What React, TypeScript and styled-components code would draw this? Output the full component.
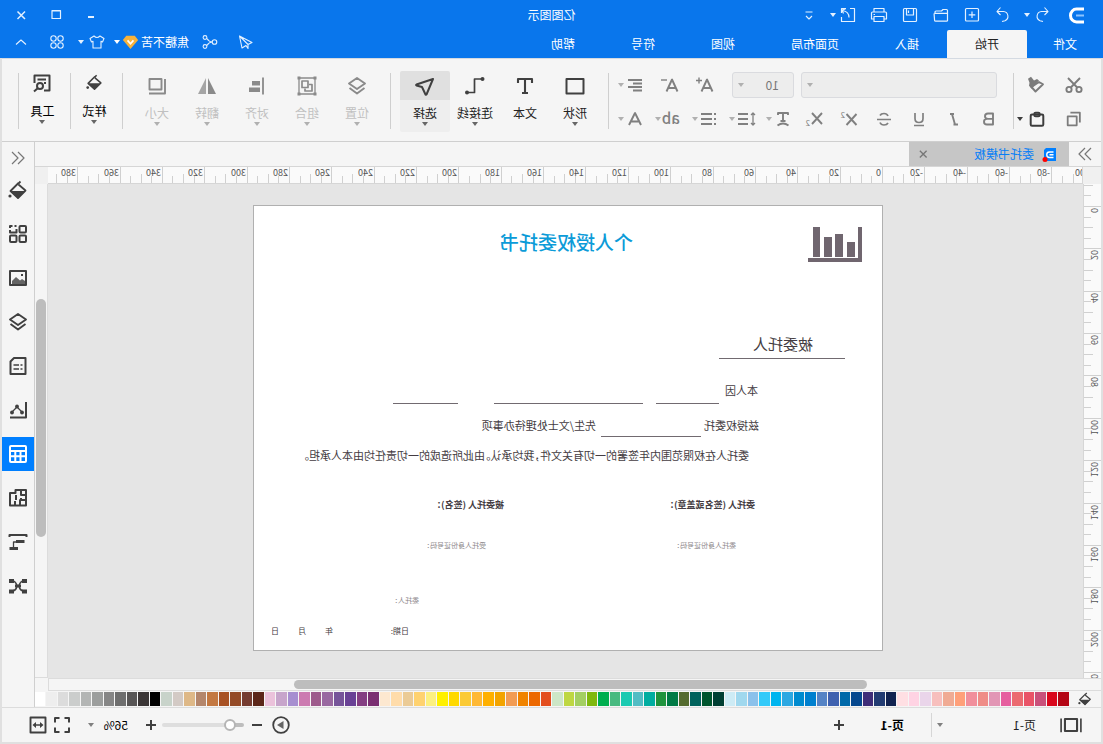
import React, { useLayoutEffect, useRef, useState } from 'react';
import styled, { createGlobalStyle } from 'styled-components';

const GlobalStyle = createGlobalStyle`
  * { box-sizing: border-box; }
  body { margin: 0; background: #e0e0e0; }
  body, button, select, input { font-family: "Noto Sans CJK SC", "Noto Sans", sans-serif; font-size: 12px; line-height: 16px; }
  button { border: 0; padding: 0; margin: 0; background: none; color: inherit; cursor: pointer; }
  svg { display: block; flex: none; }
`;

/* The whole window is shown as a mirror image. */
const Window = styled.div`
  display: flex; flex-direction: column; min-height: 100vh;
  transform: scaleX(-1); overflow: hidden; color: #222;
`;

/* ---------- icons ---------- */
type IconProps = { name: string; size?: number };
const S = ({ children, w = 1.6 }: { children: React.ReactNode; w?: number }) => (
  <g fill="none" stroke="currentColor" strokeWidth={w} strokeLinejoin="round">{children}</g>
);
const F = ({ d }: { d: string }) => <path d={d} fill="currentColor" />;

const icons: Record<string, React.ReactNode> = {
  undo: <S w={1.1}><path d="M7.500 2.500 4 6.500 7.500 10M4 6.500H10.500a4.800 4.800 0 0 1 1.500 9.200L9 16.500" /></S>,
  redo: <S w={1.1}><path d="M12.500 2.500 16 6.500 12.500 10M16 6.500H9.500a4.800 4.800 0 0 0 -1.500 9.200L11 16.500" /></S>,
  newDoc: <S w={1.2}><rect x="3.500" y="3.500" width="13" height="12.500" rx="1" /><path d="M10 6.500v6.500M6.700 9.800h6.600" /></S>,
  open: <S w={1.2}><path d="M3.500 16V5.500q0-1 1-1H8L9.500 6h5.500q1 0 1 1V8.500M3.500 9q0-.7 1-.7H16q1 0 .9 1L16.400 15.500q-.1 .7-1 .7H4.500q-1 0-1-1Z" /></S>,
  save: <S w={1.2}><path d="M3.500 4.500q0-1 1-1H15.500q1 0 1 1V15.500q0 1-1 1H4.500q-1 0-1-1ZM6.500 3.500V10H13.500V3.500M11.500 5.500V8" /></S>,
  print: <S w={1.2}><path d="M5 7V3.500H15V7M5 14H2.500V8q0-1 1-1h13q1 0 1 1v6H15M5 11.500H15V16.500H5ZM14 9.500h1.500" /></S>,
  export: <S w={1.2}><path d="M8 3.500H3.500V16.500H16.500V12M12 3.500h4.500V8M9 12.500q0-6 6.500-7M12.500 4l3.500 1-1.500 3.500" /></S>,
  customize: <S w={1.1}><path d="M6.500 7h7M7 11l3 3 3-3" /></S>,
  min: <S w={2}><path d="M7 12h6" /></S>,
  max: <S w={1.2}><path d="M5.500 5.500h8.500v8H5.500ZM5.500 6h8.500" /></S>,
  close: <S w={1.5}><path d="M6 6.500l7.500 7.500M13.500 6.500L6 14" /></S>,
  send: <S w={1.1}><path d="M16.500 4 4 10.500l4 2V16.500L10 13.500l4 2.500ZM16.500 4 8 12.500" /></S>,
  share: <S w={1.1}><circle cx="5.500" cy="10" r="2.300" /><circle cx="15" cy="5.500" r="1.900" /><circle cx="15" cy="14.500" r="1.900" /><path d="M7.800 10q3 0 5.300-3.500M7.800 10q3 0 5.300 3.500" /></S>,
  vip: <><path d="M5 2h10l4 5-9 10.500L1 7Z" fill="#f7b23b" /><path d="M6.500 7.500 10 11.500l3.500-4" fill="none" stroke="#fff" strokeWidth="2" /></>,
  shirt: <S w={1.1}><path d="M7 4 3 6.500 4.500 10 6 9.300V16h8V9.300l1.500.7L17 6.500 13 4q-3 3-6 0Z" /></S>,
  clover: <S w={1.1}><circle cx="6.500" cy="6.500" r="2.700" /><circle cx="13.500" cy="6.500" r="2.700" /><circle cx="6.500" cy="13.500" r="2.700" /><circle cx="13.500" cy="13.500" r="2.700" /></S>,
  up: <S w={1.1}><path d="M5 12.500 10 8l5 4.500" /></S>,
  cut: <S w={1.9}><circle cx="5" cy="14.500" r="2.600" /><circle cx="15" cy="14.500" r="2.600" /><path d="M4 3 13.200 12.500M16 3 6.800 12.500" /></S>,
  copy: <S w={2}><path d="M7 7h10v10H7ZM3.500 14v-11H14" /></S>,
  painter: <><S w={1.9}><path d="M7 7 3 9.300 10.500 16.500 14.500 12Z" /></S><F d="M7 5.500 9 4l3 1.500L15 1.800l3 2-1.500 4 .5 3-2.500 3Z" /></>,
  paste: <S w={2.2}><rect x="3" y="5" width="14" height="12.500" rx="1.500" /><rect x="7" y="3" width="6" height="4" rx="1.500" /></S>,
  bold: <S w={1.9}><path d="M6 4.500h5q3 0 3 2.700t-3 2.700H6ZM6 9.900h6q3 0 3 2.800t-3 2.800H6Z" /></S>,
  italic: <S w={1.9}><path d="M10 5h4M12 5 9 15.500M6 15.500h4.500" /></S>,
  underline: <S w={1.7}><path d="M6 4v5.500q0 4 4 4t4-4V4M5 16.500h10" /></S>,
  strike: <S w={1.7}><path d="M14 6.500q-1-2-4-2t-4 2.500M3 10.500h14M14 13.500q-1 2.500-4 2.500t-4-2" /></S>,
  sup: <><S w={1.9}><path d="M2.500 5l10 11M12.500 5l-10 11" /></S><text x="14" y="9" fontSize="8" fill="currentColor">2</text></>,
  sub: <><S w={1.9}><path d="M2 4l10 11M12 4l-10 11" /></S><text x="14" y="17" fontSize="8" fill="currentColor">2</text></>,
  textFx: <S w={1.9}><path d="M5 6V4H15V6M10 4V12M7.500 12h5M4.500 16.500q5.500-4 11 0" /></S>,
  lineGap: <S w={1.9}><path d="M8 5h10M8 10h10M8 15h10" /><path strokeWidth="1.300" d="M3 4v12M1 6l2-2 2 2M1 14l2 2 2-2" /></S>,
  list: <S w={1.9}><path d="M7 5h11M7 10h11M7 15h11M3 5h2M3 10h2M3 15h2" /></S>,
  ab: <text x="2" y="15" fontSize="15" fontWeight="500" fill="currentColor">ab</text>,
  fontA: <S w={1.9}><path d="M4 16 10 4l6 12M6.500 12.500h7" /></S>,
  bigger: <S w={1.9}><path d="M2.500 16.500 8 4.500l5.500 12M4.500 13h7" /><path d="M13 5.500h6M16 2.500v6" strokeWidth="1.400" /></S>,
  smaller: <S w={1.9}><path d="M2.500 16.500 8 4.500l5.500 12M4.500 13h7" /><path d="M13 5h6" strokeWidth="1.400" /></S>,
  align: <S w={1.8}><path d="M3 5h14M3 8.500h9M3 12h14M3 15.500h9" /></S>,
  rect: <S w={2}><path d="M1.500 3h17v14.500h-17Z" /></S>,
  text: <S w={2.1}><path d="M3 7V3h14v4M10 3v14M7 17h6" /></S>,
  connector: <><S w={1.7}><path d="M4 3H10.500V16.500H17" /></S><circle cx="2.500" cy="16.500" r="0" /><circle cx="2.500" cy="3" r="2" fill="currentColor" /><circle cx="18" cy="16.500" r="2" fill="currentColor" /></>,
  select: <S w={2}><path d="M2 3 18.500 8.500q.8.500 0 1L13 11 9.500 18.500q-.6.600-1 0Z" /></S>,
  layers: <S w={1.9}><path d="M10 2 18 7.500 10 13 2 7.500ZM2.500 12 10 17.500 17.500 12" /></S>,
  group: <><S w={1.3}><path d="M2 2h16v16H2Z" /><path d="M8 8.500H5V15h7v-2.500" strokeWidth="1.700" /><rect x="9" y="5" width="6" height="6.500" strokeWidth="1.700" /></S><F d="M.5.500h3v3h-3ZM16.500.500h3v3h-3ZM.5 16.500h3v3h-3ZM16.500 16.500h3v3h-3Z" /></>,
  alignObj: <><S w={1.8}><path d="M4 1.500v17" /></S><F d="M7 5h8v4.500H7ZM7 11.500h11V16H7Z" /></>,
  flip: <><F d="M9 2v16H1Z" /><path d="M11 2v16h8Z" fill="currentColor" opacity=".75" /></>,
  sizeObj: <S w={1.9}><path d="M5.500 3h12v10.500h-12ZM2 3v14.500h16" /></S>,
  tools: <S w={2}><path d="M8 17.500H2.500V2.500H17.500V10M6 6.500h8.500M6 10h2" /><circle cx="12" cy="13" r="3" /><path d="M14 15l4 3.500" /></S>,
  bucket: <><S w={1.8}><path d="M9.500 3 17.500 11 10 18 2.500 10.500 9.500 4.500M7.500 1.500 10 4" /></S><F d="M3 11 H17.500 L10 18.500Z" /><circle cx="18" cy="16" r="1.600" fill="currentColor" /></>,
  tiles: <S w={2}><rect x="2" y="2" width="6.500" height="6.500" rx="1" /><path d="M11.500 5V8.500H18V6M11.500 2h2M15.500 2H18V4" /><rect x="2" y="11.500" width="6.500" height="6.500" rx="1" /><rect x="11.500" y="11.500" width="6.500" height="6.500" rx="1" /></S>,
  image: <><S w={2}><path d="M2 3h16v14H2Z" /></S><path d="M3 16v-3l3-2 2 1.500 4-3.500 4 4v3Z" fill="currentColor" opacity=".8" /><F d="M5 6h2v2H5Z" /></>,
  page: <S w={2}><path d="M2.500 2H14l3.500 3.500V18h-15Z" /><path d="M5.500 9h2M5.500 13h2M9 9h5.500M9 13h5.500" strokeWidth="1.700" /></S>,
  chart: <><S w={2}><path d="M2 2v15.500h16" /><path d="M6 12l5-5 5 5" strokeWidth="1.300" /></S><circle cx="6" cy="12.500" r="1.900" fill="currentColor" /><circle cx="11" cy="6.500" r="1.900" fill="currentColor" /><circle cx="16" cy="12.500" r="1.900" fill="currentColor" /></>,
  table: <S w={2}><rect x="2" y="2" width="16" height="16" rx="1" /><path d="M2 7h16M2 12.300h16M7.500 7v11M12.700 7v11" /></S>,
  plan: <S w={2}><path d="M2 2h10.500v3H18v12.500H2ZM7 2v5H2M7 10v3M2 12h6v5M12 7v5M13 17v-4" /></S>,
  gantt: <><S w={2}><path d="M1.500 5V3h17v2" /><path d="M9 10h5.500v5" strokeWidth="1.300" /></S><F d="M3.500 8h8.500v3H3.500ZM10 15h8.500v3H10Z" /></>,
  mindmap: <><S w={1.5}><path d="M4 5q4 0 5 5q-1 5-5 5M16 5q-4 0-5 5q1 5 5 5" /></S><F d="M1 3h5v4H1ZM14 3h5v4h-5ZM1 13.500h5v4H1ZM14 13.500h5v4h-5ZM7 8.500h6v3H7Z" /></>,
  right: <S w={1.2}><path d="M4 4l6 6-6 6M10 4l6 6-6 6" /></S>,
  left: <S w={1.2}><path d="M16 4l-6 6 6 6M10 4l-6 6 6 6" /></S>,
  plus: <S w={2}><path d="M10 5v10M5 10h10" /></S>,
  minus: <S w={2}><path d="M5 10h10" /></S>,
  play: <><S w={1.8}><circle cx="10" cy="10" r="7.800" /></S><path d="M7.500 6l6.500 4-6.500 4Z" fill="currentColor" opacity=".8" /></>,
  fit: <S w={2}><path d="M3 7.500V3h4.500M12.500 3H17v4.500M17 12.500V17h-4.500M7.500 17H3v-4.500" /></S>,
  fitWidth: <><S w={1.9}><path d="M2.500 2.500h15v15h-15Z" /><path d="M6 10h8" strokeWidth="1.500" /></S><F d="M4.500 10 8 7v6ZM15.500 10 12 7v6Z" /></>,
  pages: <S w={1.9}><path d="M4.500 4.500h11v11H4.500Z" /><path d="M1 4v12.500M19 4v12.500" strokeWidth="1.500" /></S>,
};

const IconSvg = styled.svg`overflow: visible;`;
const Icon = ({ name, size = 20 }: IconProps) => (
  <IconSvg width={size} height={size} viewBox="0 0 20 20" aria-hidden="true">{icons[name]}</IconSvg>
);
const CaretSvg = styled.svg`color: var(--caret, currentColor);`;
const Caret = () => (
  <CaretSvg width="6" height="4" viewBox="0 0 6 4" aria-hidden="true"><path d="M0 0h6L3 4Z" fill="currentColor" /></CaretSvg>
);

/* ---------- title bar ---------- */
const Header = styled.header`background: #0976ec; color: #e4f1ff; height: 58px;`;
const TitleRow = styled.div`display: grid; grid-template-columns: 1fr auto 1fr; align-items: center; height: 30px;`;
const QuickBar = styled.div`display: flex; align-items: center; gap: 11px; padding-left: 19px;`;
const Logo = styled.svg`margin-right: 6px;`;
const WithCaret = styled.button<{ $gap?: number }>`display: flex; align-items: center; gap: ${p => p.$gap ?? 2}px;`;
const PlainButton = styled.button<{ $w?: number }>`
  display: flex; align-items: center; justify-content: center; width: ${p => p.$w ?? 20}px;
`;
const AppTitle = styled.h1`margin: 0; font-size: 12px; font-weight: 400; line-height: 16px; color: #fff;`;
const WindowControls = styled.div`display: flex; justify-content: flex-end; gap: 15px; padding-right: 11px;`;
const TabRow = styled.div`display: flex; justify-content: space-between; height: 28px;`;
const Tabs = styled.nav`display: flex;`;
const Tab = styled.button<{ $active?: boolean; $wide?: number }>`
  padding: 0 ${p => p.$wide ?? 28}px; height: 28px; border-radius: 2px 2px 0 0;
  color: ${p => (p.$active ? '#222' : '#fff')}; background: ${p => (p.$active ? '#f5f5f5' : 'none')};
`;
const UserBar = styled.div`display: flex; align-items: center; height: 24px; padding-right: 11px; gap: 16px;`;
const Account = styled.div`display: flex; align-items: center; gap: 7px; margin: 0 -5px;`;
const UserName = styled.button`display: flex; align-items: center; gap: 2px; color: #fff;`;

/* ---------- ribbon ---------- */
const Frame = styled.div`
  flex: 1; display: flex; flex-direction: column; background: #f5f5f5;
  border: solid #e0e0e0; border-width: 0 2px 2px;
`;
const Ribbon = styled.div`
  display: flex; height: 84px; padding-top: 9px; border-top: 1px solid #d4dae2; border-bottom: 1px solid #cfcfcf;
`;
const Divider = styled.i`width: 1px; height: 56px; margin-top: 5px; background: #cfcfcf; flex: none;`;
const Clipboard = styled.div`
  display: grid; grid-template: 34px 34px / 42px 39px; align-items: center; padding-left: 6px; color: #7c7c7c;
`;
const ClipCell = styled.button<{ $dark?: boolean; $start?: boolean }>`
  display: flex; align-items: center; gap: 5px; justify-content: ${p => (p.$start ? 'flex-start' : 'center')};
  padding-left: ${p => (p.$start ? 7 : 0)}px; color: ${p => (p.$dark ? '#3c3c3c' : 'inherit')};
`;
const FontGroup = styled.div`width: 404px; padding-left: 16px; color: #808080; --caret: #b0b0b0;`;
const FontRow = styled.div`display: flex; align-items: center; height: 34px;`;
const Field = styled.label<{ $w: number }>`
  display: grid; grid-template: 26px / 1fr 17px; align-items: center; width: ${p => p.$w}px; margin-right: 7px; color: #a0a0a0;
`;
const Select = styled.select`
  grid-area: 1 / 1 / 2 / 3; appearance: none; height: 26px; width: 100%; padding: 0 14px; margin: 0;
  border: 1px solid #dadbdf; border-radius: 3px; background: #ededed; color: #777;
`;
const FieldCaret = styled.span`grid-area: 1 / 2; padding-left: 5px; pointer-events: none;`;
const Spread = styled.div<{ $gap: number; $left?: number }>`
  display: flex; align-items: center; gap: ${p => p.$gap}px; margin-left: ${p => p.$left ?? 0}px;
`;
const ToolGroup = styled.div`display: flex; padding: 3px 9px 0 8px;`;
const Tool = styled.button<{ $active?: boolean; $dim?: boolean }>`
  display: flex; flex-direction: column; align-items: center; width: 50px; height: 61px; border-radius: 2px;
  color: ${p => (p.$dim ? '#c0c0c0' : '#222')};
  background: ${p => (p.$active ? 'linear-gradient(#e0e0e0 29px, #eeeeee 29px)' : 'none')};
  > span { height: 18px; line-height: 18px; margin-top: 4px; }
`;
const ToolIcon = styled.i<{ $dim?: boolean }>`
  display: flex; align-items: center; height: 29px; color: ${p => (p.$dim ? '#8a8a8a' : '#404040')};
`;
const ToolCaret = styled.i<{ $dim?: boolean }>`color: ${p => (p.$dim ? '#b0b0b0' : '#666')};`;
const NarrowTool = styled(Tool)`width: 51px; padding-left: 4px; color: #000; > span { margin-top: 6px; }`;
const NarrowIcon = styled(ToolIcon)`height: 27px; margin-top: 1px;`;

/* ---------- workspace ---------- */
const Body = styled.div`flex: 1; display: flex;`;
const Main = styled.main`flex: 1; min-width: 0; display: flex; flex-direction: column;`;
const DocTabs = styled.div`display: flex; height: 25px; border-bottom: 1px solid #d6d6d6; color: #777;`;
const DocTab = styled.div`
  display: flex; align-items: center; width: 160px; margin-left: 6px; padding: 0 4px 0 12px; background: #c6c6c6;
  > a { flex: 1; margin-left: 8px; color: #077ef6; text-decoration: none; }
`;
const Expand = styled.button`display: flex; align-items: center; width: 26px; justify-content: flex-end;`;
const Workspace = styled.div`flex: 1; display: grid; grid-template: 17px 1fr / 18px 1fr 13px; min-height: 0;`;
const Corner = styled.div`background: #f0f0f0;`;
const RulerSvg = styled.svg`display: block; width: 100%; height: 100%; background: #fafafa;`;
const HRuler = styled.div`border-bottom: 1px solid #d6d6d6; border-left: 1px solid #d6d6d6; overflow: hidden; min-width: 0;`;
const VRuler = styled.div`border-right: 1px solid #d6d6d6; overflow: hidden; contain: size;`;
const Canvas = styled.div`background: #e5e5e5; overflow: hidden; padding: 21px 0 27px 200px;`;
const VScroll = styled.div`
  display: grid; grid-template-rows: 115fr 239fr 140fr; border: solid #dcdcdc; border-width: 0 0 1px 1px; padding: 0 1px;
`;
const HScroll = styled.div`
  display: grid; grid-template-columns: 234fr 574fr 245fr; height: 13px; margin-right: 13px; padding: 1px 0;
  border: solid #dcdcdc; border-width: 1px 1px 1px 0;
`;
const VThumb = styled.i`grid-row: 2; border-radius: 5px; background: #bdbdbd;`;
const HThumb = styled.i`grid-column: 2; border-radius: 5px; background: #bdbdbd;`;

/* ---------- document page ---------- */
const Sheet = styled.article`position: relative; width: 630px; height: 446px; background: #fff; border: 1px solid #b0b0b0;`;
/* Shapes sit freely on the drawing sheet. */
const Shape = styled.p<{ $x: number; $y: number; $size?: number; $weight?: number; $color?: string }>`
  position: absolute; margin: 0; left: ${p => p.$x}px; top: ${p => p.$y - 10}px; line-height: 20px; white-space: nowrap;
  font-size: ${p => p.$size ?? 11}px; font-weight: ${p => p.$weight ?? 400}; color: ${p => p.$color ?? '#443c42'};
`;
/* Body sentence set with half-width punctuation. */
const Sentence = styled(Shape)`font-feature-settings: "halt";`;
const Rule = styled.i<{ $x: number; $y: number; $w: number }>`
  position: absolute; left: ${p => p.$x}px; top: ${p => p.$y}px; width: ${p => p.$w}px; height: 1px; background: #716a70;
`;
const Chart = styled.svg`position: absolute; left: 20px; top: 21px;`;

/* ---------- side panel, palette, status bar ---------- */
const Side = styled.aside`
  width: 33px; border-left: 1px solid #cfcfcf; display: flex; flex-direction: column; gap: 10px; color: #404040;
`;
const SideToggle = styled.button`display: flex; align-items: center; justify-content: center; height: 31px; margin-bottom: -10px; color: #777;`;
const SideButton = styled.button<{ $active?: boolean }>`
  display: flex; align-items: center; justify-content: center; height: 34px;
  color: ${p => (p.$active ? '#fff' : '#404040')}; background: ${p => (p.$active ? '#007fff' : 'none')};
`;
const Palette = styled.div`display: flex; align-items: center; height: 16px; color: #404040; padding-left: 9px;`;
const Swatches = styled.div`flex: 1; display: flex; gap: 1px; margin-left: 9px; height: 14px;`;
const Swatch = styled.button<{ $c: string }>`flex: 1; background: ${p => p.$c};`;
const Status = styled.footer`
  display: flex; align-items: center; height: 35px; border-top: 1px solid #dcdcdc; color: #404040; padding: 0 26px 0 19px;
  --caret: #808080;
`;
const PageSelect = styled.button`display: flex; align-items: center; justify-content: space-between; width: 99px; margin-left: 24px; color: #222;`;
const StatusDivider = styled.i`width: 1px; height: 24px; margin: 0 27px 0 5px; background: #d6d6d6;`;
const PageTab = styled.button`font-weight: 700; color: #000; margin-right: 31px;`;
const Spacer = styled.i`flex: 1;`;
const Zoom = styled.input`
  appearance: none; width: 82px; height: 12px; margin: 0 1px 0 3px; background: none;
  &::-webkit-slider-runnable-track { height: 4px; border-radius: 2px; background: linear-gradient(90deg, #bdbdbd 12px, #dedede 12px); }
  &::-webkit-slider-thumb { appearance: none; width: 12px; height: 12px; margin-top: -4px; border-radius: 6px; border: 2px solid #b5b5b5; background: #fff; }
`;
const ZoomValue = styled.button`display: flex; align-items: center; justify-content: space-between; width: 40px; margin: 0 16px 0 13px; color: #000;`;
const FitGroup = styled.div`display: flex; gap: 4px;`;

/* Ruler marks every 5 units; 20 units take STEP pixels. */
const STEP = 42.36;
const ticks = (origin: number, length: number) => {
  const from = Math.ceil((-origin - 24) / (STEP / 4));
  const to = Math.floor((length - origin) / (STEP / 4));
  return Array.from({ length: Math.max(0, to - from + 1) }, (_, i) => {
    const k = i + from;
    return { k, pos: (k * STEP) / 4, len: k % 4 === 0 ? 18 : k % 2 === 0 ? 9 : 7 };
  });
};

const useBox = () => {
  const ref = useRef<HTMLDivElement>(null);
  const [box, setBox] = useState({ w: 0, h: 0 });
  useLayoutEffect(() => {
    const el = ref.current!;
    const read = () => setBox({ w: el.clientWidth, h: el.clientHeight });
    read();
    const observer = new ResizeObserver(read);
    observer.observe(el);
    return () => observer.disconnect();
  }, []);
  return { ref, box };
};

const HorizontalRuler = () => {
  const { ref, box } = useBox();
  return (
    <HRuler ref={ref}>
      <RulerSvg>
        {ticks(199, box.w).map(t => (
          <g key={t.k}>
            <rect x={Math.round(199 + t.pos)} y={16 - t.len} width="1" height={t.len} fill="#d0d0d0" />
            {t.k % 4 === 0 && <text x={Math.round(201 + t.pos)} y="9" fontSize="9" fill="#555">{t.k * 5}</text>}
          </g>
        ))}
      </RulerSvg>
    </HRuler>
  );
};
const VerticalRuler = () => {
  const { ref, box } = useBox();
  return (
    <VRuler ref={ref}>
      <RulerSvg>
        {ticks(22, box.h).filter(t => t.k > -4).map(t => (
          <g key={t.k}>
            <rect x={17 - t.len} y={Math.round(22 + t.pos)} width={t.len} height="1" fill="#d0d0d0" />
            {t.k % 4 === 0 && (
              <text transform={`translate(10 ${Math.round(24 + t.pos)}) rotate(-90)`} textAnchor="end" fontSize="9" fill="#555">{t.k * 5}</text>
            )}
          </g>
        ))}
      </RulerSvg>
    </VRuler>
  );
};

const palette = (
  'b40615 d9071c c9507a e95367 eb6a70 e65f9f e296b5 ef8c87 f18f9c ffa07a f0ab94 f7bfbd ead5ea ffd3e3 ffdfe3 11224f 223b72 3f2d78 06488e 0069a9 3f61af 5583c5 0080cf 008bcf 2da8e2 00b5ef 33caf9 8bc1eb a0d8ee cdebf5 ' +
  '003f33 00552e 00625c 556b2f 007a45 1f933d 00ada0 52bdc4 1bcab1 48ba80 00ae4f 7fb80e a3cf62 bed742 cde6c7 e34e1f ec6800 f08300 f29c54 f3a400 ffb000 ffb935 fbca35 ffd900 fff000 fcf07f ffd26f ebcb96 ffdcaa fde8d0 ' +
  '7a2f72 843e82 694195 765499 9968a0 9e5b8c cc7bb1 a78fd0 c7a5cb ebc2db 5c2619 753b30 944b27 a85224 c37841 b4866b deb887 d3cac5 c8d3ca 000000 3b3636 575555 6e6e6e 868686 9c9e9d b3b5b4 cbcdcc dcdcdc eeeeee ffffff'
).split(' ');

const drawTools = [
  { icon: 'rect', label: '形状', caret: true },
  { icon: 'text', label: '文本', caret: false },
  { icon: 'connector', label: '连接线', caret: true },
  { icon: 'select', label: '选择', caret: true, active: true },
];
const arrangeTools = [
  { icon: 'layers', label: '位置' },
  { icon: 'group', label: '组合' },
  { icon: 'alignObj', label: '对齐' },
  { icon: 'flip', label: '翻转' },
  { icon: 'sizeObj', label: '大小' },
];
const sideTools = ['bucket', 'tiles', 'image', 'layers', 'page', 'chart', 'table', 'plan', 'gantt', 'mindmap'];

export default function App() {
  return (
    <>
      <GlobalStyle />
      <Window>
        <Header>
          <TitleRow>
            <QuickBar>
              <Logo width="15" height="17" viewBox="0 0 15 17">
                <path d="M0 2H7.500a6 6.500 0 0 1 0 13H0" fill="none" stroke="#fff" strokeWidth="3" />
                <path d="M0 8.500h8" stroke="#8cc3ff" strokeWidth="2" />
              </Logo>
              <WithCaret aria-label="undo"><Icon name="undo" /><Caret /></WithCaret>
              {['redo', 'newDoc', 'open', 'save', 'print'].map(n => (
                <PlainButton key={n} aria-label={n}><Icon name={n} /></PlainButton>
              ))}
              <WithCaret aria-label="export"><Icon name="export" /><Caret /></WithCaret>
              <PlainButton aria-label="customize"><Icon name="customize" /></PlainButton>
            </QuickBar>
            <AppTitle>亿图图示</AppTitle>
            <WindowControls>
              {['min', 'max', 'close'].map(n => (
                <PlainButton key={n} aria-label={n}><Icon name={n} /></PlainButton>
              ))}
            </WindowControls>
          </TitleRow>
          <TabRow>
            <Tabs>
              <Tab $wide={26}>文件</Tab>
              <Tab $active>开始</Tab>
              {['插入', '页面布局', '视图', '符号', '帮助'].map(t => <Tab key={t}>{t}</Tab>)}
            </Tabs>
            <UserBar>
              <PlainButton aria-label="send"><Icon name="send" /></PlainButton>
              <PlainButton aria-label="share"><Icon name="share" /></PlainButton>
              <Account>
                <UserName>焦糖不苦<Icon name="vip" size={17} /><Caret /></UserName>
                <WithCaret aria-label="theme" $gap={3}><Icon name="shirt" /><Caret /></WithCaret>
              </Account>
              <PlainButton aria-label="apps"><Icon name="clover" /></PlainButton>
              <PlainButton aria-label="collapse"><Icon name="up" /></PlainButton>
            </UserBar>
          </TabRow>
        </Header>

        <Frame>
          <Ribbon>
            <Clipboard>
              <ClipCell aria-label="cut"><Icon name="cut" /></ClipCell>
              <ClipCell aria-label="format painter" $start><Icon name="painter" /></ClipCell>
              <ClipCell aria-label="copy"><Icon name="copy" size={18} /></ClipCell>
              <ClipCell aria-label="paste" $dark $start><Icon name="paste" size={18} /><Caret /></ClipCell>
            </Clipboard>
            <Divider />
            <FontGroup>
              <FontRow>
                <Field $w={196}>
                  <Select aria-label="font"><option></option></Select>
                  <FieldCaret><Caret /></FieldCaret>
                </Field>
                <Field $w={62}>
                  <Select aria-label="font size"><option>10</option></Select>
                  <FieldCaret><Caret /></FieldCaret>
                </Field>
                <Spread $gap={15} $left={10}>
                  <PlainButton aria-label="larger"><Icon name="bigger" /></PlainButton>
                  <PlainButton aria-label="smaller"><Icon name="smaller" /></PlainButton>
                  <WithCaret aria-label="align" $gap={1}><Icon name="align" /><Caret /></WithCaret>
                </Spread>
              </FontRow>
              <FontRow>
                <Spread $gap={19}>
                  {['bold', 'italic', 'underline', 'strike', 'sup', 'sub'].map(n => (
                    <PlainButton key={n} $w={16} aria-label={n}><Icon name={n} /></PlainButton>
                  ))}
                </Spread>
                <Spread $gap={10} $left={13}>
                  {['textFx', 'lineGap', 'list', 'ab', 'fontA'].map(n => (
                    <WithCaret key={n} $gap={1} aria-label={n}><Icon name={n} /><Caret /></WithCaret>
                  ))}
                </Spread>
              </FontRow>
            </FontGroup>
            <Divider />
            <ToolGroup>
              {drawTools.map(t => (
                <Tool key={t.label} $active={t.active}>
                  <ToolIcon><Icon name={t.icon} /></ToolIcon>
                  <span>{t.label}</span>
                  {t.caret && <ToolCaret><Caret /></ToolCaret>}
                </Tool>
              ))}
            </ToolGroup>
            <Divider />
            <ToolGroup>
              {arrangeTools.map(t => (
                <Tool key={t.label} $dim>
                  <ToolIcon $dim><Icon name={t.icon} /></ToolIcon>
                  <span>{t.label}</span>
                  <ToolCaret $dim><Caret /></ToolCaret>
                </Tool>
              ))}
            </ToolGroup>
            <Divider />
            <NarrowTool><NarrowIcon><Icon name="bucket" size={17} /></NarrowIcon><span>样式</span><ToolCaret><Caret /></ToolCaret></NarrowTool>
            <Divider />
            <NarrowTool><NarrowIcon><Icon name="tools" /></NarrowIcon><span>工具</span><ToolCaret><Caret /></ToolCaret></NarrowTool>
            <Divider />
          </Ribbon>

          <Body>
            <Main>
              <DocTabs>
                <Expand aria-label="expand"><Icon name="right" /></Expand>
                <DocTab>
                  <svg width="15" height="15" viewBox="0 0 15 15" aria-hidden="true">
                    <path d="M1 1h10l2 2v11H1Z" fill="#007fff" />
                    <path d="M3.500 5H7.500a2.500 2.500 0 0 1 0 5.500H3.500M3.500 7.800h4" fill="none" stroke="#fff" strokeWidth="1.400" />
                    <circle cx="12" cy="12.500" r="2.500" fill="#f00" />
                  </svg>
                  <a href="#doc">委托书模板</a>
                  <PlainButton aria-label="close tab"><Icon name="close" size={18} /></PlainButton>
                </DocTab>
              </DocTabs>
              <Workspace>
                <Corner /><HorizontalRuler /><Corner />
                <VerticalRuler />
                <Canvas>
                  <Sheet>
                    <Chart width="55" height="36" viewBox="0 0 55 36" fill="#70666f">
                      <path d="M0 0h4v31h50v4H0ZM7 15h8v15H7ZM19 7h8v23h-8ZM30 10h8v20h-8ZM42 0h7v30h-7Z" />
                    </Chart>
                    <Shape $x={249} $y={36} $size={19} $weight={500} $color="#0c9bd8">个人授权委托书</Shape>
                    <Shape $x={69} $y={138} $size={15}>被委托人</Shape>
                    <Rule $x={37} $y={152} $w={126} />
                    <Shape $x={124} $y={184}>本人因</Shape>
                    <Rule $x={163} $y={197} $w={63} />
                    <Rule $x={239} $y={197} $w={149} />
                    <Rule $x={424} $y={197} $w={65} />
                    <Shape $x={123} $y={219}>兹授权委托</Shape>
                    <Rule $x={181} $y={230} $w={100} />
                    <Shape $x={286} $y={219}>先生/文士处理待办事项</Shape>
                    <Sentence $x={133} $y={249}>委托人在权限范围内年签署的一切有关文件，我均承认。由此所造成的一切责任均由本人承担。</Sentence>
                    <Shape $x={127} $y={299} $size={9} $weight={700}>委托人 (签名或盖章)：</Shape>
                    <Shape $x={378} $y={299} $size={9} $weight={700}>被委托人 (签名)：</Shape>
                    <Shape $x={146} $y={339} $size={7} $color="#8d888b">委托人身份证号码：</Shape>
                    <Shape $x={396} $y={339} $size={7} $color="#8d888b">受托人身份证号码：</Shape>
                    <Shape $x={463} $y={394} $size={7} $color="#8d888b">委托人：</Shape>
                    <Shape $x={473} $y={425} $size={8}>日期:</Shape>
                    <Shape $x={549} $y={425} $size={8}>年</Shape>
                    <Shape $x={576} $y={425} $size={8}>月</Shape>
                    <Shape $x={603} $y={425} $size={8}>日</Shape>
                  </Sheet>
                </Canvas>
                <VScroll><VThumb /></VScroll>
              </Workspace>
              <HScroll><HThumb /></HScroll>
              <Palette>
                <Icon name="bucket" size={14} />
                <Swatches>{palette.map((c, i) => <Swatch key={i} $c={'#' + c} aria-label={'#' + c} />)}</Swatches>
              </Palette>
            </Main>
            <Side>
              <SideToggle aria-label="collapse panel"><Icon name="left" /></SideToggle>
              {sideTools.map(n => (
                <SideButton key={n} $active={n === 'table'} aria-label={n}><Icon name={n} /></SideButton>
              ))}
            </Side>
          </Body>

          <Status>
            <Icon name="pages" size={22} />
            <PageSelect>页-1<Caret /></PageSelect>
            <StatusDivider />
            <PageTab>页-1</PageTab>
            <PlainButton aria-label="add page"><Icon name="plus" /></PlainButton>
            <Spacer />
            <PlainButton aria-label="present" $w={29}><Icon name="play" /></PlainButton>
            <PlainButton aria-label="zoom out"><Icon name="minus" /></PlainButton>
            <Zoom type="range" aria-label="zoom" min={0} max={100} defaultValue={12} />
            <PlainButton aria-label="zoom in"><Icon name="plus" /></PlainButton>
            <ZoomValue>56%<Caret /></ZoomValue>
            <FitGroup>
              <PlainButton aria-label="fit page"><Icon name="fit" /></PlainButton>
              <PlainButton aria-label="fit width"><Icon name="fitWidth" /></PlainButton>
            </FitGroup>
          </Status>
        </Frame>
      </Window>
    </>
  );
}
